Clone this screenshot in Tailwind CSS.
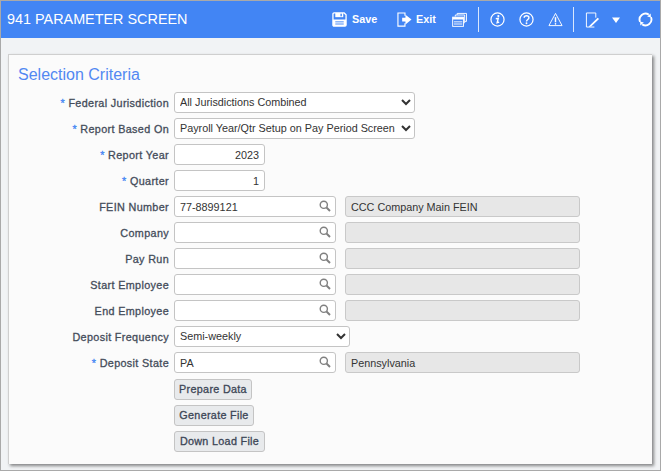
<!DOCTYPE html>
<html><head><meta charset="utf-8">
<script src="https://cdn.jsdelivr.net/npm/@tailwindcss/browser@4"></script>
</head>
<body class="m-0 overflow-hidden">
<div class="w-[661px] h-[471px] bg-[#f1f3f5] border border-[#a9a9a9] flex flex-col font-['Liberation_Sans',Arial,sans-serif] text-[#333b49]">
  <header class="h-[37px] shrink-0 bg-[#4285f4] flex items-center text-white pl-[6px]">
    <h1 class="text-[14.4px] font-normal leading-none">941 PARAMETER SCREEN</h1>
    <div class="ml-auto flex items-center h-full">
      <svg class="w-[15px] h-[15px]" viewBox="0 0 16 16" fill="none" stroke="white" stroke-width="1.4"><path d="M1 2.2C1 1.5 1.5 1 2.2 1H13L15 3V13.8C15 14.5 14.5 15 13.8 15H2.2C1.500 15 1 14.5 1 13.800Z" fill="#4285f4"/><rect x="3.500" y="1" width="8.500" height="4.500" fill="white" stroke="none"/><rect x="9" y="1.800" width="1.500" height="2.800" fill="#4285f4" stroke="none"/><rect x="1" y="8" width="14" height="7" fill="white" stroke="none"/><path d="M3.500 10.500H12.500M3.500 12.800H12.500" stroke="#4285f4" stroke-width="1"/></svg>
      <span class="ml-[5px] text-[10.8px] font-bold w-[25px]">Save</span>
      <svg class="ml-[20px] w-[15px] h-[15px]" viewBox="0 0 16 16" fill="none" stroke="white" stroke-width="1.200"><path d="M8.500 4V1H1V15H8.500V12"/><path d="M5.500 6H9V2.800L15.500 8L9 13.200V10H5.500Z" fill="white" stroke="none"/></svg>
      <span class="ml-[4px] text-[10.8px] font-bold w-[21px]">Exit</span>
      <svg class="ml-[15px] w-[15px] h-[15px]" viewBox="0 0 16 16" fill="none" stroke="white" stroke-width="1"><path d="M5.500 3V1.500H15.500V10H13.500"/><path d="M3.500 4.800V3.200H13.500V11.500H12"/><rect x="0.700" y="5.500" width="11.500" height="9.800" fill="#4285f4"/><rect x="0.700" y="5.500" width="11.500" height="2.500" fill="white" stroke="none"/><path d="M2 10.500H11M2 12.800H11"/></svg>
      <div class="ml-[11px] w-px h-[25px] bg-white/80"></div>
      <svg class="ml-[11px] w-[15px] h-[15px]" viewBox="0 0 16 16" fill="none" stroke="white"><circle cx="8" cy="8" r="7" stroke-width="1.300"/><circle cx="8.900" cy="4.300" r="1.200" fill="white" stroke="none"/><path d="M6.200 7.200L8.800 6.800L7.600 11.500L9.800 10.800" stroke-width="1.500"/></svg>
      <svg class="ml-[14px] w-[15px] h-[15px]" viewBox="0 0 16 16" fill="none" stroke="white"><circle cx="8" cy="8" r="7" stroke-width="1.300"/><path d="M5.500 6.200C5.500 3.200 10.600 3.200 10.600 6.200C10.600 8 8 8 8 10" stroke-width="1.500"/><circle cx="8" cy="12" r="1" fill="white" stroke="none"/></svg>
      <svg class="ml-[14px] w-[15px] h-[15px]" viewBox="0 0 16 16" fill="none" stroke="white"><path d="M8 1.500L15 14.500H1Z" stroke-width="1" stroke-linejoin="round"/><path d="M8 5.500V11" stroke-width="1.600"/><circle cx="8" cy="12.600" r=".9" fill="white" stroke="none"/></svg>
      <div class="ml-[10px] w-px h-[25px] bg-white/80"></div>
      <svg class="ml-[11px] w-[15px] h-[16px]" viewBox="0 0 16 17" fill="none" stroke="white"><path d="M11.500 6V1H1.500V16H10" stroke-width="1"/><path d="M4.500 15L13.500 6L15 7.500L6.500 15.500L4 16Z" fill="white" stroke="none"/></svg>
      <svg class="ml-[11px] w-[10px] h-[10px]" viewBox="0 0 10 10"><path d="M1 2.500H9L5 8Z" fill="white"/></svg>
      <svg class="ml-[17px] mr-[7px] w-[15px] h-[15px]" viewBox="0 0 16 16" fill="none" stroke="white" stroke-width="2"><path d="M2.200 10.500A6.300 6.300 0 0 1 11.500 2.800"/><path d="M13.800 5.500A6.300 6.300 0 0 1 4.500 13.200"/><path d="M13.500 1.500L13.800 5.800L9.800 4.700Z" fill="white" stroke="none"/><path d="M2.500 14.500L2.200 10.200L6.200 11.300Z" fill="white" stroke="none"/></svg>
    </div>
  </header>
  <main class="mt-[16px] ml-[7px] mr-[7px] w-[644px] h-[410px] bg-[#fbfbfb] border-t border-l border-[#cfcfcf] shadow-[2px_2px_3px_rgba(0,0,0,0.45)] pl-[9px] pt-[10px]">
    <h2 class="text-[16px] leading-[20px] font-normal text-[#5288f2]">Selection Criteria</h2>
    <form class="mt-[7px] grid grid-cols-[151px_auto] gap-x-[5px] gap-y-[5px] justify-start items-center text-[10.8px]">
      <label class="pt-[2px] text-right tracking-[0.35px] [-webkit-text-stroke:0.3px] text-[#444c5a]"><span class="text-[#4285f4]">*</span> Federal Jurisdiction</label>
      <select class="w-[241px] h-[21px] bg-white border border-[#c4c4c4] rounded-[3px] pl-[1px] pb-[2px] text-[#333]"><option>All Jurisdictions Combined</option></select>
      <label class="pt-[2px] text-right tracking-[0.35px] [-webkit-text-stroke:0.3px] text-[#444c5a]"><span class="text-[#4285f4]">*</span> Report Based On</label>
      <select class="w-[241px] h-[21px] bg-white border border-[#c4c4c4] rounded-[3px] pl-[1px] pb-[2px] text-[#333]"><option>Payroll Year/Qtr Setup on Pay Period Screen</option></select>
      <label class="pt-[2px] text-right tracking-[0.35px] [-webkit-text-stroke:0.3px] text-[#444c5a]"><span class="text-[#4285f4]">*</span> Report Year</label>
      <input class="w-[91px] h-[21px] bg-white border border-[#c4c4c4] rounded-[3px] px-[5px] text-right text-[#333]" value="2023">
      <label class="pt-[2px] text-right tracking-[0.35px] [-webkit-text-stroke:0.3px] text-[#444c5a]"><span class="text-[#4285f4]">*</span> Quarter</label>
      <input class="w-[91px] h-[21px] bg-white border border-[#c4c4c4] rounded-[3px] px-[5px] text-right text-[#333]" value="1">

      <label class="pt-[2px] text-right tracking-[0.35px] [-webkit-text-stroke:0.3px] text-[#444c5a]">FEIN Number</label>
      <div class="flex gap-[9px]">
        <div class="relative"><input class="w-[162px] h-[21px] bg-white border border-[#c4c4c4] rounded-[3px] pl-[5px] text-[#333]" value="77-8899121"><svg class="absolute right-[5px] top-[4px] w-[12px] h-[12px]" viewBox="0 0 12 12" fill="none" stroke="#808080"><circle cx="4.800" cy="4.800" r="3.600" stroke-width="1.400"/><path d="M7.500 7.500L11 11" stroke-width="2"/></svg></div>
        <input readonly class="w-[235px] h-[21px] bg-[#e7e7e7] border border-[#c9c9c9] rounded-[3px] pl-[5px] text-[#333]" value="CCC Company Main FEIN">
      </div>
      <label class="pt-[2px] text-right tracking-[0.35px] [-webkit-text-stroke:0.3px] text-[#444c5a]">Company</label>
      <div class="flex gap-[9px]">
        <div class="relative"><input class="w-[162px] h-[21px] bg-white border border-[#c4c4c4] rounded-[3px] pl-[5px] text-[#333]"><svg class="absolute right-[5px] top-[4px] w-[12px] h-[12px]" viewBox="0 0 12 12" fill="none" stroke="#808080"><circle cx="4.800" cy="4.800" r="3.600" stroke-width="1.400"/><path d="M7.500 7.500L11 11" stroke-width="2"/></svg></div>
        <input readonly class="w-[235px] h-[21px] bg-[#e7e7e7] border border-[#c9c9c9] rounded-[3px] pl-[5px] text-[#333]">
      </div>
      <label class="pt-[2px] text-right tracking-[0.35px] [-webkit-text-stroke:0.3px] text-[#444c5a]">Pay Run</label>
      <div class="flex gap-[9px]">
        <div class="relative"><input class="w-[162px] h-[21px] bg-white border border-[#c4c4c4] rounded-[3px] pl-[5px] text-[#333]"><svg class="absolute right-[5px] top-[4px] w-[12px] h-[12px]" viewBox="0 0 12 12" fill="none" stroke="#808080"><circle cx="4.800" cy="4.800" r="3.600" stroke-width="1.400"/><path d="M7.500 7.500L11 11" stroke-width="2"/></svg></div>
        <input readonly class="w-[235px] h-[21px] bg-[#e7e7e7] border border-[#c9c9c9] rounded-[3px] pl-[5px] text-[#333]">
      </div>
      <label class="pt-[2px] text-right tracking-[0.35px] [-webkit-text-stroke:0.3px] text-[#444c5a]">Start Employee</label>
      <div class="flex gap-[9px]">
        <div class="relative"><input class="w-[162px] h-[21px] bg-white border border-[#c4c4c4] rounded-[3px] pl-[5px] text-[#333]"><svg class="absolute right-[5px] top-[4px] w-[12px] h-[12px]" viewBox="0 0 12 12" fill="none" stroke="#808080"><circle cx="4.800" cy="4.800" r="3.600" stroke-width="1.400"/><path d="M7.500 7.500L11 11" stroke-width="2"/></svg></div>
        <input readonly class="w-[235px] h-[21px] bg-[#e7e7e7] border border-[#c9c9c9] rounded-[3px] pl-[5px] text-[#333]">
      </div>
      <label class="pt-[2px] text-right tracking-[0.35px] [-webkit-text-stroke:0.3px] text-[#444c5a]">End Employee</label>
      <div class="flex gap-[9px]">
        <div class="relative"><input class="w-[162px] h-[21px] bg-white border border-[#c4c4c4] rounded-[3px] pl-[5px] text-[#333]"><svg class="absolute right-[5px] top-[4px] w-[12px] h-[12px]" viewBox="0 0 12 12" fill="none" stroke="#808080"><circle cx="4.800" cy="4.800" r="3.600" stroke-width="1.400"/><path d="M7.500 7.500L11 11" stroke-width="2"/></svg></div>
        <input readonly class="w-[235px] h-[21px] bg-[#e7e7e7] border border-[#c9c9c9] rounded-[3px] pl-[5px] text-[#333]">
      </div>
      <label class="pt-[2px] text-right tracking-[0.35px] [-webkit-text-stroke:0.3px] text-[#444c5a]">Deposit Frequency</label>
      <select class="w-[176px] h-[21px] bg-white border border-[#c4c4c4] rounded-[3px] pl-[1px] pb-[2px] text-[#333]"><option>Semi-weekly</option></select>
      <label class="pt-[2px] text-right tracking-[0.35px] [-webkit-text-stroke:0.3px] text-[#444c5a]"><span class="text-[#4285f4]">*</span> Deposit State</label>
      <div class="flex gap-[9px]">
        <div class="relative"><input class="w-[162px] h-[21px] bg-white border border-[#c4c4c4] rounded-[3px] pl-[5px] text-[#333]" value="PA"><svg class="absolute right-[5px] top-[4px] w-[12px] h-[12px]" viewBox="0 0 12 12" fill="none" stroke="#808080"><circle cx="4.800" cy="4.800" r="3.600" stroke-width="1.400"/><path d="M7.500 7.500L11 11" stroke-width="2"/></svg></div>
        <input readonly class="w-[235px] h-[21px] bg-[#e7e7e7] border border-[#c9c9c9] rounded-[3px] pl-[5px] text-[#333]" value="Pennsylvania">
      </div>
      <span></span>
      <button type="button" class="mt-[1px] justify-self-start h-[21px] w-[78px] bg-[#e8eaec] border border-[#c4c4c4] rounded-[3px] tracking-[0.3px] [-webkit-text-stroke:0.3px] text-[#3c4656] p-0">Prepare Data</button>
      <span></span>
      <button type="button" class="justify-self-start h-[21px] w-[80px] bg-[#e8eaec] border border-[#c4c4c4] rounded-[3px] tracking-[0.3px] [-webkit-text-stroke:0.3px] text-[#3c4656] p-0">Generate File</button>
      <span></span>
      <button type="button" class="justify-self-start h-[21px] w-[91px] bg-[#e8eaec] border border-[#c4c4c4] rounded-[3px] tracking-[0.3px] [-webkit-text-stroke:0.3px] text-[#3c4656] p-0">Down Load File</button>
    </form>
  </main>
</div>
</body></html>
